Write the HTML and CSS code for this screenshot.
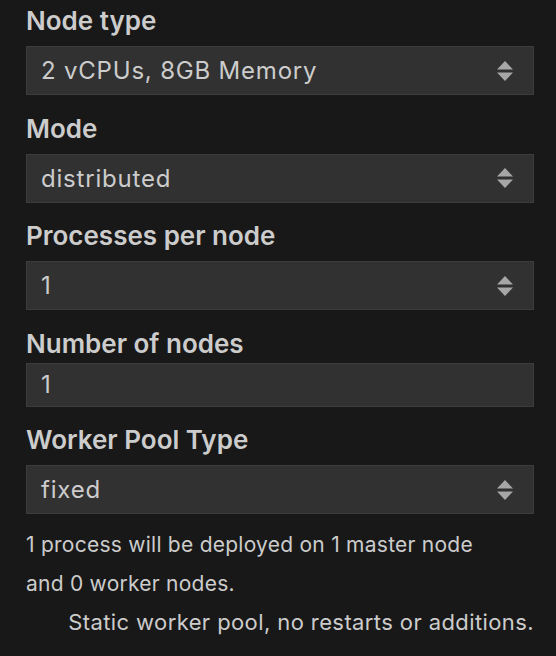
FILE: index.html
```html
<!DOCTYPE html>
<html>
<head>
<meta charset="utf-8">
<link rel="stylesheet" href="styles.css">
</head>
<body>
<div class="form">
  <div class="field">
    <div class="label">Node type</div>
    <div class="select"><span class="value">2 vCPUs, 8GB Memory</span>
      <svg class="arrows" width="16" height="20" viewBox="0 0 16 20"><path d="M0 8.5 L8 0 L16 8.5 Z M0 11.5 L16 11.5 L8 20 Z"/></svg>
    </div>
  </div>
  <div class="field">
    <div class="label">Mode</div>
    <div class="select"><span class="value">distributed</span>
      <svg class="arrows" width="16" height="20" viewBox="0 0 16 20"><path d="M0 8.5 L8 0 L16 8.5 Z M0 11.5 L16 11.5 L8 20 Z"/></svg>
    </div>
  </div>
  <div class="field">
    <div class="label">Processes per node</div>
    <div class="select"><span class="value">1</span>
      <svg class="arrows" width="16" height="20" viewBox="0 0 16 20"><path d="M0 8.5 L8 0 L16 8.5 Z M0 11.5 L16 11.5 L8 20 Z"/></svg>
    </div>
  </div>
  <div class="field">
    <div class="label">Number of nodes</div>
    <input class="input" type="text" value="1">
  </div>
  <div class="field">
    <div class="label">Worker Pool Type</div>
    <div class="select"><span class="value">fixed</span>
      <svg class="arrows" width="16" height="20" viewBox="0 0 16 20"><path d="M0 8.5 L8 0 L16 8.5 Z M0 11.5 L16 11.5 L8 20 Z"/></svg>
    </div>
  </div>
  <div class="summary">1 process will be deployed on 1 master node<br>and 0 worker nodes.</div>
  <div class="note">Static worker pool, no restarts or additions.</div>
</div>
</body>
</html>
```

FILE: styles.css
```css
html, body {
  margin: 0;
  padding: 0;
  background: #181818;
}
body {
  font-family: Inter, "Noto Sans", "Liberation Sans", sans-serif;
  color: #cccccc;
}
.form {
  width: 508px;
  margin-left: 26px;
  padding-top: 5px;
  display: flex;
  flex-direction: column;
}
.field {
  display: flex;
  flex-direction: column;
  margin-bottom: 17.6px;
}
.label {
  font-size: 26px;
  line-height: 32px;
  font-weight: 600;
  color: #cccccc;
  margin-bottom: 3px;
}
.select {
  margin-top: 6px;
  height: 49px;
  box-sizing: border-box;
  background: #313131;
  border: 1px solid #3c3c3c;
  display: flex;
  align-items: center;
  justify-content: space-between;
  padding: 0 20px 0 14px;
}
.value {
  font-size: 24px;
  letter-spacing: 0.8px;
  color: #cccccc;
}
.arrows {
  fill: #a6a6a6;
  display: block;
}
.input {
  height: 44px;
  box-sizing: border-box;
  background: #313131;
  border: 1px solid #3c3c3c;
  padding: 0 14px;
  margin: 0;
  font-family: inherit;
  font-size: 24px;
  letter-spacing: 0.8px;
  color: #cccccc;
  outline: none;
}
.summary {
  margin-top: -7px;
  font-size: 21px;
  letter-spacing: 0.25px;
  line-height: 39px;
  color: #cccccc;
}
.note {
  font-size: 22px;
  letter-spacing: 0.4px;
  line-height: 39px;
  text-align: right;
  color: #cccccc;
}
```
